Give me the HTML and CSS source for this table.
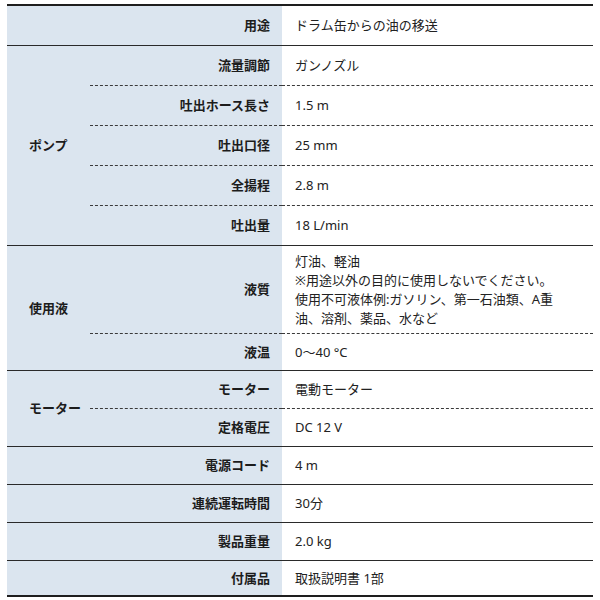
FILE: index.html
```html
<!DOCTYPE html>
<html lang="ja">
<head>
<meta charset="utf-8">
<link rel="stylesheet" href="styles.css">
</head>
<body>
<table class="spec">
  <colgroup><col class="c-group"><col class="c-label"><col class="c-value"></colgroup>
  <tbody>
    <tr class="h40 solid"><th class="label" colspan="2">用途</th><td class="value">ドラム缶からの油の移送</td></tr>

    <tr class="h40 dash"><th class="group" rowspan="5">ポンプ</th><th class="label">流量調節</th><td class="value">ガンノズル</td></tr>
    <tr class="h40 dash"><th class="label">吐出ホース長さ</th><td class="value">1.5 m</td></tr>
    <tr class="h40 dash"><th class="label">吐出口径</th><td class="value">25 mm</td></tr>
    <tr class="h40 dash"><th class="label">全揚程</th><td class="value">2.8 m</td></tr>
    <tr class="h40 solid"><th class="label">吐出量</th><td class="value">18 L/min</td></tr>

    <tr class="tall dash"><th class="group" rowspan="2">使用液</th><th class="label">液質</th><td class="value">灯油、軽油<br>※用途以外の目的に使用しないでください。<br>使用不可液体例:ガソリン、第一石油類、A重<br>油、溶剤、薬品、水など</td></tr>
    <tr class="h37 solid"><th class="label">液温</th><td class="value">0～40 °C</td></tr>

    <tr class="h38 dash"><th class="group" rowspan="2">モーター</th><th class="label">モーター</th><td class="value">電動モーター</td></tr>
    <tr class="h38 solid"><th class="label">定格電圧</th><td class="value">DC 12 V</td></tr>

    <tr class="h38 solid"><th class="label" colspan="2">電源コード</th><td class="value">4 m</td></tr>
    <tr class="h38 solid"><th class="label" colspan="2">連続運転時間</th><td class="value">30分</td></tr>
    <tr class="h38 solid"><th class="label" colspan="2">製品重量</th><td class="value">2.0 kg</td></tr>
    <tr class="h35 last"><th class="label" colspan="2">付属品</th><td class="value">取扱説明書 1部</td></tr>
  </tbody>
</table>
</body>
</html>
```

FILE: styles.css
```css
html, body {
  margin: 0;
  padding: 0;
  background: #ffffff;
}

body {
  font-family: "Noto Sans", "Noto Sans CJK JP", sans-serif;
  font-size: 13px;
  color: #222222;
}

.spec {
  margin: 4px 0 0 7px;
  width: 586px;
  table-layout: fixed;
  border-collapse: collapse;
  border-top: 2px solid #1e1e1e;
}

.c-group { width: 83px; }
.c-label { width: 192px; }
.c-value { width: 311px; }

.spec th,
.spec td {
  padding: 0;
  vertical-align: middle;
  line-height: 19px;
}

.spec th {
  background: #dbe5ef;
  font-weight: 700;
  color: #1c1c1c;
}

.label {
  text-align: right;
  padding-right: 12px !important;
}

.group {
  text-align: left;
  padding-left: 22px !important;
  border-bottom: 1px solid #2a2a2a;
}

.value {
  text-align: left;
  padding-left: 13px !important;
  background: #ffffff;
  font-weight: 400;
}

.h40 > th,
.h40 > td { height: 39px; }

.h37 > th,
.h37 > td { height: 36px; }

.h38 > th,
.h38 > td { height: 37px; }

.h35 > th,
.h35 > td { height: 34px; }

.tall > th,
.tall > td { height: 87px; }

.solid > .label,
.solid > .value { border-bottom: 1px solid #2a2a2a; }

.dash > .label,
.dash > .value { border-bottom: 1px dashed #3a3a3a; }

.last > .label,
.last > .value { border-bottom: 2px solid #1e1e1e; }
```
